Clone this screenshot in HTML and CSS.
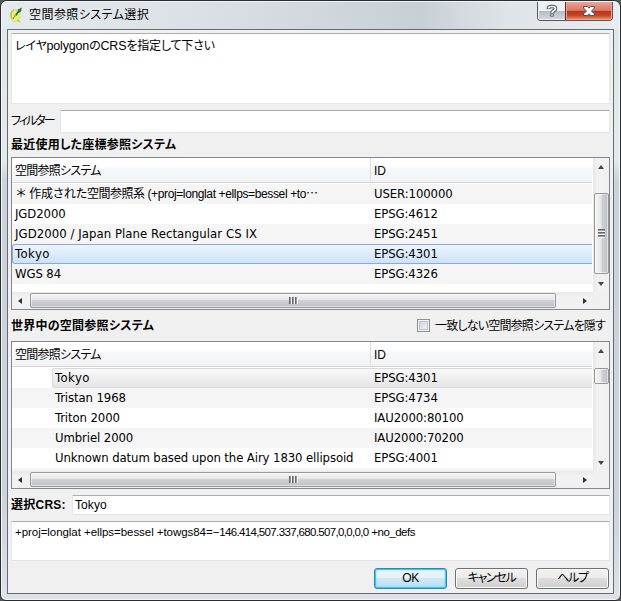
FILE: index.html
```html
<!DOCTYPE html>
<html lang="ja">
<head>
<meta charset="utf-8">
<title>空間参照システム選択</title>
<link rel="stylesheet" href="styles.css">
</head>
<body>
<div class="window">
  <header class="titlebar">
    <svg class="app-icon" width="14" height="16" viewBox="0 0 14 16">
      <ellipse cx="6.300" cy="8.500" rx="5.200" ry="6.300" fill="#eeed78" stroke="#d9dc98" stroke-width="1"/>
      <path d="M5 3C2 4.500 1.500 8 3 11.500M8 12.500l3 2.500" stroke="#b5c862" stroke-width="1.500" fill="none"/>
      <path d="M4 12L8.500 5" stroke="#6f9a50" stroke-width="1.300" stroke-dasharray="2 .6"/>
      <path d="M12.800 .5L12 4.500 9.500 6 7.500 9 6.500 7.500 8.500 4.500 9 2.500Z" fill="#187a35"/>
    </svg>
    <h1 class="title">空間参照システム選択</h1>
    <div class="controls">
      <button class="control help-control" aria-label="?">
        <svg width="12" height="14" viewBox="0 0 12 14"><path d="M2.500 5V4Q2.500 2.500 6 2.500T9.500 4.500Q9.500 6 7.200 7.200Q6 7.800 6 9.500M6 10.300v2.200" fill="none" stroke="#4c4d58" stroke-width="3.600"/><path d="M2.500 4.500V4Q2.500 2.500 6 2.500T9.500 4.500Q9.500 6 7.200 7.200Q6 7.800 6 9M6 10.500v1.300" fill="none" stroke="#fff" stroke-width="1.700"/></svg>
      </button>
      <button class="control close-control" aria-label="×">
        <svg width="12" height="10" viewBox="0 0 12 10"><path d="M.5 .5H4.500L6 2.200 7.500 .5H11.500V2L8.500 5l3 3v1.500h-4L6 7.800 4.500 9.500h-4V8l3-3-3-3Z" fill="#fff" stroke="#534f5f"/></svg>
      </button>
    </div>
  </header>
  <main class="client">
    <div class="box message"><span class="message-text">レイヤ<b class="arial">polygon</b>の<b class="arial">CRS</b>を指定して下さい</span></div>
    <div class="filter-row"><label class="filter-label">フィルター</label><div class="box filter-input"></div></div>
    <h2 class="heading recent-heading">最近使用した座標参照システム</h2>

    <section class="tree recent">
      <div class="view">
        <div class="columns head"><span class="jp">空間参照システム</span><span class="id-label">ID</span></div>
        <div class="columns row alt"><span class="custom">＊ 作成された空間参照系 <i class="proj">(+proj=longlat +ellps=bessel +to⋯</i></span><span>USER:100000</span></div>
        <div class="columns row"><span>JGD2000</span><span>EPSG:4612</span></div>
        <div class="columns row alt"><span class="plane">JGD2000 / Japan Plane Rectangular CS IX</span><span>EPSG:2451</span></div>
        <div class="columns row selected"><span class="tokyo">Tokyo</span><span>EPSG:4301</span></div>
        <div class="columns row alt"><span>WGS 84</span><span>EPSG:4326</span></div>
      </div>
      <div class="vbar"><i class="arrow up"></i><div class="vthumb"><i class="grip vgrip"></i></div><i class="arrow down"></i></div>
      <div class="hbar"><i class="arrow left"></i><div class="hthumb"><i class="grip hgrip"></i></div><i class="arrow right"></i></div>
      <div class="corner"></div>
    </section>

    <div class="world-row">
      <h2 class="heading world-heading">世界中の空間参照システム</h2>
      <label class="hide"><span class="check"></span><span class="hide-text">一致しない空間参照システムを隠す</span></label>
    </div>

    <section class="tree world">
      <div class="view">
        <div class="columns head"><span class="jp">空間参照システム</span><span class="id-label">ID</span></div>
        <div class="columns row current"><span class="tokyo">Tokyo</span><span>EPSG:4301</span></div>
        <div class="columns row alt"><span>Tristan 1968</span><span>EPSG:4734</span></div>
        <div class="columns row"><span>Triton 2000</span><span>IAU2000:80100</span></div>
        <div class="columns row alt"><span>Umbriel 2000</span><span>IAU2000:70200</span></div>
        <div class="columns row"><span>Unknown datum based upon the Airy 1830 ellipsoid</span><span>EPSG:4001</span></div>
        <div class="row alt"></div>
      </div>
      <div class="vbar"><i class="arrow up"></i><div class="vthumb"></div><i class="arrow down"></i></div>
      <div class="hbar"><i class="arrow left"></i><div class="hthumb"><i class="grip hgrip"></i></div><i class="arrow right"></i></div>
      <div class="corner"></div>
    </section>

    <div class="selected-row"><label class="heading selected-label">選択<span class="crs">CRS:</span></label><div class="box selected-input">Tokyo</div></div>
    <div class="box definition"><span>+proj=longlat +ellps=bessel +towgs84=−</span><span class="numbers">146.414,507.337,680.507,0,0,0,0</span><span class="tail"> +no_defs</span></div>
    <footer class="buttons">
      <button class="button default"><span>OK</span></button>
      <button class="button cancel"><span>キャンセル</span></button>
      <button class="button help"><span>ヘルプ</span></button>
    </footer>
  </main>
</div>
</body>
</html>
```
FILE: styles.css
```css
* { box-sizing: border-box; }
body { margin: 0; background: #55585a; overflow: hidden; }
h1, h2 { margin: 0; }
b, i { font-weight: inherit; font-style: normal; }
button { padding: 0; font: inherit; color: inherit; }

.window {
  width: 621px; height: 601px;
  padding: 0 6px 6px;
  border: 1px solid #292c30;
  border-radius: 7px 7px 6px 6px;
  box-shadow: inset 0 0 0 1px #f4f7f9;
  background: linear-gradient(#dfe5ea 0, #e4e9ed 160px, #cbd2d9 180px, #ccd3da 500px, #dce2e7 100%);
  font: 12px/16px "Liberation Sans", "Noto Sans CJK JP", sans-serif;
  font-feature-settings: "palt";
  color: #000;
  white-space: nowrap;
}
.titlebar {
  height: 28px; margin: 0 -5px; padding-left: 7px;
  display: flex; align-items: flex-start;
  background: linear-gradient(90deg, #e5eaee, #d9dfe4 35%, #c9d0d5 68%, #dfe4e9 82%, #e8ecef);
  border-top: 1px solid #f1f4f6;
  border-radius: 6px 6px 0 0;
}
.app-icon { margin-top: 5px; }
.title { margin: 4px 0 0 6px; font-size: 12px; line-height: 18px; font-weight: 400; letter-spacing: .45px; }
.controls { display: flex; margin-left: auto; margin-right: 6px; height: 19px; border: 1px solid #54585e; border-top: 0; border-radius: 0 0 4px 4px; overflow: hidden; }
.control { display: flex; align-items: center; justify-content: center; border: 0; }
.help-control { width: 27px; background: linear-gradient(#edf0f2 48%, #b5bbc3 50%, #d6dadf); box-shadow: inset 1px -1px #eceff2; }
.close-control { width: 47px; background: linear-gradient(#eba698, #da7765 47%, #b9321a 50%, #c64725 75%, #ee9a70); border-left: 1px solid #6d2822; box-shadow: inset 1px 0 #e6a395, inset -1px -1px #e7a690; }

.client { height: 565px; padding: 3px; border: 1px solid #636c72; background: #f0f0f0; display: flex; flex-direction: column; }
.box { background: #fff; border: 1px solid #e2e7ee; border-top-color: #abadb3; border-radius: 1px; }
.message { height: 71px; padding: 4px 3px 0; }
.message-text { letter-spacing: -.18px; }
.arial { font-size: 12.500px; }
.filter-row { display: flex; margin-top: 6px; height: 23px; }
.filter-label { width: 49px; flex: none; padding-top: 3px; letter-spacing: -2px; }
.filter-input { flex: 1; }
.heading { font-size: 12px; font-weight: 700; }
.recent-heading { margin-top: 3px; line-height: 18px; height: 21px; letter-spacing: .22px; }

.tree { display: grid; grid-template-columns: 1fr 16px; border: 1px solid #828790; background: #fff; }
.recent { height: 153px; grid-template-rows: 134px 17px; }
.world { height: 148px; grid-template-rows: 129px 17px; }
.view { overflow: hidden; padding-right: 1px; }
.columns { display: grid; grid-template-columns: 359px 1fr; }
.columns > span { padding-left: 3px; }
.head { height: 25px; line-height: 27px; border-bottom: 1px solid #d5d5d5; background: linear-gradient(#fff 9px, #f7f8fa 10px, #f1f2f4); }
.head span { height: 24px; }
.head .jp { letter-spacing: -.75px; border-right: 1px solid #dedfe1; }
.row { height: 20px; line-height: 19px; font-family: "DejaVu Sans Condensed", "DejaVu Sans", "Noto Sans CJK JP", sans-serif; font-stretch: condensed; font-size: 13px; letter-spacing: -.1px; }
.head + .row { margin-top: 1px; }
.alt { background: #f5f5f5; }
.plane { letter-spacing: .06px; }
.tokyo { letter-spacing: .5px; }
.selected { background: linear-gradient(#edf5fe, #cde2fc); border: solid #84acdd; border-width: 1px 0 1px 1px; border-radius: 3px 0 0 3px; line-height: 17px; }
.recent .selected { grid-template-columns: 358px 1fr; }
.recent .selected span:first-child { padding-left: 2px; }
.custom { font: 12px/21px "Liberation Sans", "Noto Sans CJK JP", sans-serif; height: 20px; letter-spacing: -.48px; }
.proj { letter-spacing: -.37px; }
.world .columns.row > span:first-child { padding-left: 43px; }
.world .current { margin-left: 40px; grid-template-columns: 318px 1fr; border: solid #d9d9d9; border-width: 1px 0 1px 1px; border-radius: 3px 0 0 3px; background: linear-gradient(#f9f9f9, #e5e5e5); line-height: 17px; }
.world .columns.current > span:first-child { padding-left: 2px; }

.vbar { display: flex; flex-direction: column; align-items: center; background: linear-gradient(90deg, #e8e8e8, #f2f2f2 30%, #f0f0f0); }
.hbar { display: flex; align-items: center; background: linear-gradient(#e8e8e8, #f2f2f2 30%, #f0f0f0); }
.corner { background: #f0f0f0; }
.vthumb, .hthumb { display: flex; align-items: center; justify-content: center; border: 1px solid #989898; border-radius: 2px; box-shadow: inset 0 0 0 1px rgba(255, 255, 255, .5); }
.vthumb { width: 15px; flex: none; background: linear-gradient(90deg, #f4f4f4, #e6e6e8 48%, #d0d1d4 52%, #bfc0c4); }
.hthumb { height: 15px; width: 526px; flex: none; margin-left: 8px; background: linear-gradient(#f4f4f4, #e6e6e8 45%, #d0d1d4 50%, #bfc0c4); }
.recent .vthumb { height: 81px; margin-top: 24px; }
.world .vthumb { height: 16px; margin-top: 15px; }
.arrow { width: 0; height: 0; border: solid transparent; flex: none; }
.up { margin-top: 7px; border-width: 0 3.500px 4px; border-bottom-color: #464646; }
.down { margin: auto 0 6px; border-width: 4px 3.500px 0; border-top-color: #464646; }
.left { margin-left: 6px; border-width: 3.500px 4px 3.500px 0; border-right-color: #303030; }
.right { margin: 0 6px 0 auto; border-width: 3.500px 0 3.500px 4px; border-left-color: #303030; }
.hgrip { width: 9px; height: 7px; background: repeating-linear-gradient(90deg, #66686b 0 1px, #999 1px 2px, #f4f4f4 2px 3px); }
.vgrip { width: 7px; height: 9px; background: repeating-linear-gradient(#66686b 0 1px, #999 1px 2px, #f4f4f4 2px 3px); }

.world-row { height: 31px; display: flex; justify-content: space-between; align-items: center; }
.world-heading { letter-spacing: .25px; }
.hide { display: flex; align-items: center; width: 193px; }
.check { width: 13px; height: 13px; flex: none; border: 1px solid #8e8f8f; background: linear-gradient(135deg, #cbcfd5, #f6f6f6); box-shadow: inset 0 0 0 1px #f4f4f4, inset 0 0 0 2px #bfc4ca; margin-right: 5px; }
.hide-text { letter-spacing: -.8px; }

.selected-row { display: flex; margin-top: 6px; height: 20px; }
.selected-label { width: 61px; line-height: 20px; letter-spacing: .25px; }
.selected-input { flex: 1; padding-left: 2px; line-height: 18px; letter-spacing: .1px; }
.definition { margin-top: 6px; height: 40px; padding: 2px 3px; font-size: 11.500px; letter-spacing: -.05px; }
.numbers { letter-spacing: -.65px; }
.tail { letter-spacing: -.5px; white-space: pre; }
.buttons { display: flex; justify-content: flex-end; gap: 8px; margin: 7px 1px 0 0; }
.button { width: 73px; height: 21px; line-height: 17px; border: 1px solid #707070; border-radius: 3px; box-shadow: inset 0 0 0 1px #fafafa; background: linear-gradient(#f2f2f2, #ebebeb 48%, #dddddd 50%, #cfcfcf); }
.default { border-color: #3c7fb1; box-shadow: inset 0 0 0 1px #33cdf5, inset 0 0 2px 1px #64d8f8; background: linear-gradient(#eef7fb, #e4f1f9 48%, #cfe7f5 50%, #b9def2); letter-spacing: -.5px; }
.cancel { letter-spacing: -1.300px; }
.help { letter-spacing: -1.200px; }
```
